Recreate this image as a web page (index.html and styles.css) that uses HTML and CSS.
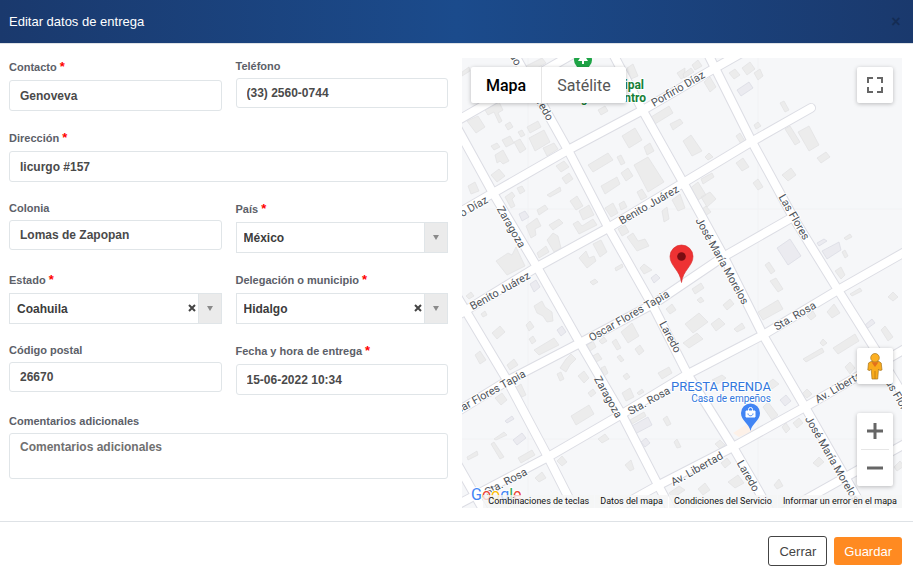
FILE: index.html
```html
<!DOCTYPE html>
<html lang="es">
<head>
<meta charset="utf-8">
<meta name="viewport" content="width=device-width, initial-scale=1">
<title>Editar datos de entrega</title>
<link rel="stylesheet" href="styles.css">
</head>
<body>
<main class="dialog">
  <header class="dialog-header">
    <h1 class="dialog-title">Editar datos de entrega</h1>
    <button type="button" class="dialog-close" aria-label="Cerrar ventana">×</button>
  </header>

  <div class="dialog-body">
    <form class="form" id="delivery">
      <div class="field required">
        <label for="contacto">Contacto <span class="mark">*</span></label>
        <input id="contacto" type="text" value="Genoveva">
      </div>
      <div class="field">
        <label for="telefono">Teléfono</label>
        <input id="telefono" type="tel" value="(33) 2560-0744">
      </div>
      <div class="field required wide">
        <label for="direccion">Dirección <span class="mark">*</span></label>
        <input id="direccion" type="text" value="licurgo #157">
      </div>
      <div class="field">
        <label for="colonia">Colonia</label>
        <input id="colonia" type="text" value="Lomas de Zapopan">
      </div>
      <div class="field required">
        <label for="pais">País <span class="mark">*</span></label>
        <div class="select">
          <select id="pais"><option>México</option></select>
          <span class="arrow"></span>
        </div>
      </div>
      <div class="field required">
        <label for="estado">Estado <span class="mark">*</span></label>
        <div class="select">
          <select id="estado"><option>Coahuila</option></select>
          <button type="button" class="clear" aria-label="Quitar estado"><svg viewBox="0 0 8 8"><path d="M1 1l6 6M7 1l-6 6"/></svg></button>
          <span class="arrow"></span>
        </div>
      </div>
      <div class="field required">
        <label for="municipio">Delegación o municipio <span class="mark">*</span></label>
        <div class="select">
          <select id="municipio"><option>Hidalgo</option></select>
          <button type="button" class="clear" aria-label="Quitar municipio"><svg viewBox="0 0 8 8"><path d="M1 1l6 6M7 1l-6 6"/></svg></button>
          <span class="arrow"></span>
        </div>
      </div>
      <div class="field">
        <label for="cp">Código postal</label>
        <input id="cp" type="text" value="26670">
      </div>
      <div class="field required">
        <label for="fecha">Fecha y hora de entrega <span class="mark">*</span></label>
        <input id="fecha" type="text" value="15-06-2022 10:34">
      </div>
      <div class="field wide">
        <label for="comentarios">Comentarios adicionales</label>
        <textarea id="comentarios" placeholder="Comentarios adicionales"></textarea>
      </div>
    </form>

    <section class="map" aria-label="Mapa de entrega">
      <svg class="map-canvas" viewBox="462 58 440 450" preserveAspectRatio="xMidYMid slice">
        <defs>
          <g id="roads">
            <path d="M455 124L493 193 537 267 580 343 622 415 657 483 674 515"/>
            <path d="M512 50L568 150 608 227 655 310 688 375 733 447 758 490 772 515"/>
            <path d="M611 50L643 111 684 184 723 255 763 335 805 407 867 515"/>
            <path d="M705 48L715 68 751 140 793 217 838 290 875 349 910 406"/>
            <path d="M455 293L467 313 507 380 548 457 580 520"/>
            <path d="M455 460L488 518"/>
            <path d="M455 122L580 50"/>
            <path d="M455 215L493 193 568 150 643 110 715 68 745 51"/>
            <path d="M455 317L537 267 608 228 683 183 751 142 811 108"/>
            <path d="M455 413L507 381 580 343 655 303 723 257 793 217"/>
            <path d="M455 506L548 457 622 414 688 374 763 335 838 290 910 249"/>
            <path d="M605 515L657 486 733 447 805 407 910 346"/>
            <path d="M778 515L910 441"/>
          </g>
        </defs>
        <rect x="462" y="58" width="440" height="450" fill="#f6f7f9"/>
        <path class="tile" d="M528 58V508M758 58V508M462 209H902M462 439H902"/>
        <path class="building" d="M467 121l11-5 7 11-9 6zM485 110l14-8 4 8-5 3 4 8-3 2-5-11-6 3zM505 125l5-3 3 5-5 3zM527 127l11-6 3 6-11 6zM529 138l15-8 6 12-15 9zM543 148l11-5 4 6-11 7zM502 140l8-4 4 7-8 4zM518 132l4-2 3 5-4 2zM514 142l6-3 6 10-6 4zM491 146l6-3 3 4-6 3zM495 155l8-5 6 11-6 3-3-3-3 2zM491 175l8-6 6 7-8 6zM556 166l8-5 5 6-8 5zM562 178l7-5 4 6-7 5zM588 165l20-12 5 7-20 12zM617 157l4-2 4 8-4 2zM622 136l13-8 7 12-13 8zM644 147l6-4 4 8-7 4zM634 165l14-8 16 25-16 10zM621 173l7-5 5 8-7 5zM601 186l16-9 3 7-15 10zM637 192l5-3 5 8-6 3zM651 117l18-11 4 7-18 11zM670 124l10-5 3 4-10 7zM677 73l8-5v9l-4 2zM598 110l7-4 3 5-7 4zM627 68l6-4 5 12-7 3zM524 67l18-9 4 5-16 9zM462 72l7-5 1 4-8 5zM468 186l7-4 4 9-8 3zM517 188l5-2 3 5-5 3zM505 197l7-5 3 4-3 3 3 7-4 2zM547 195l13-8 1 4-11 6zM537 210l8-5 3 4-9 6zM526 226l11-8 4 8-6 3 1 6-5 3zM549 225l10-6 4 4-10 7zM570 201l7-5 6 10-7 4zM579 211l10-6 5 10-11 5zM573 224l5-3 4 5 11-7 4 6-18 9zM547 240l6-7 5 3 3 12-7 4zM537 253l9-7 3 6-10 6zM496 261l12-8 4 2 4-8 9 19-18 9zM605 208l8-5 5 10-7 4zM619 204l5-3 3 6-6 3zM618 229l7-4 4 7-7 4zM627 237l6-4 5 8 7-2 4 7-12 5zM662 211l5-4 2 12-5 3zM672 200l8-6 5 14-7 3zM579 258l7-7 3 7 5-2 2 5-9 7zM593 244l8-4 6 12-7 5zM615 268l7-4 1 3-7 4zM640 268l4-4 8 6-8 4z"/>
        <path class="building" d="M683 74l8-6 3 4-10 6zM692 65l6-5 4 6-7 4zM704 82l6-5 6 10-6 5zM729 73l6-4 5 6-6 4zM742 68l8-6 5 7-8 6zM754 73l6-4 3 7-5 4zM780 103l4-2 5 9-4 2zM754 125l4-3 3 4-5 3zM736 136l4-3 5 8-4 3zM683 141l8-6 11 16-10 5zM705 157l4-4 4 4-5 3zM785 129l5-3 10 16-5 3zM798 132l11-6 10 19-10 6zM817 158l9-6 4 5-9 6zM782 175l9-7 5 7-8 6zM736 163l7-5 6 9-7 4zM753 183l5-4 5 8-5 3zM688 190l10-8 8 13-11 7zM701 197l9-5 6 7-9 8zM701 179l11-6 2 4-11 7zM701 210l5-4 5 6-6 4zM844 238l6-4 2 3-6 3zM842 252l3-2 3 6-3 2zM765 265l4-3 6 9-4 3zM835 271l6-4 4 8-4 4zM692 289l9-6 3 5-9 6zM697 300l4-3 3 4-4 2zM723 305l7-6 4 5-7 6zM685 324l14-11 9 9-15 11zM711 324l8-6 6 6-9 7zM683 343l14-10 6 6-14 9zM734 329l8-6 3 5-8 4zM758 312l20-12 5 9-20 11zM770 281l6-3 7 11-5 3zM807 316l6-5 3 5-5 4zM827 312l7-8 6 9-8 5zM850 294l10-6 2 3-10 5zM888 297l5-5 5 5-5 4zM881 330l4-4 8 11-5 4zM803 359l19-11 2 4-18 10zM820 343l3-4 4 4-4 3zM833 348l22-14 4 7-21 13zM845 367l5-5 5 6-5 6zM768 383l5-4 6 5-7 5zM802 394l5-5 5 5-5 4zM763 407l5-5 10 13-6 5zM782 427l4-4 4 6-4 4zM793 423l6-5 4 5-6 5zM715 444l5-4 5 5-5 4zM721 463l6-5 4 5-6 5zM728 482l10-7 6 8-9 5zM698 489l7-6 5 7-7 5zM774 485l5-6 4 7-6 3zM813 463l6-6 5 5-6 5zM894 467l6-6 4 5-7 5zM712 380l10-5 4 3-8 6z"/>
        <path class="building" d="M466 296l5-4 3 4-5 3zM481 314l4-3 2 4-4 2zM492 333l8-7 5 6-8 7zM534 306l8-5 3 6 7 5 1 9-6 1-4-6-6-3zM526 325l4-4 4 6-5 4zM529 339l4-3 3 5-4 3zM534 350l20-12 5 7-20 10zM475 355l5-4 6 9-6 4zM507 365l7-6 4 6-8 5zM515 388l6-4 5 11-4 2zM495 398l7-5 5 7-6 5zM560 368l6-9 5-5 5 5-6 6-4 7zM557 374l4-2 3 7-4 2zM578 376l6-5 5 7-5 5zM588 393l5-4 3 4-5 4zM571 416l18-11 5 9-18 11zM587 345l6-4 3 6-6 4zM591 357l7-4 4 6-8 4zM601 368l4-2 3 7-4 3zM599 341l5-4 3 4-5 3zM612 342l4-3 5 9-4 2zM621 332l11-9 7 13-11 7zM617 357l3-2 4 5-3 2zM635 349l5-4 4 6-5 4zM623 376l4-3 3 4-4 3zM622 393l8-5 4 9-8 4zM637 393l5-4 2 3-5 3zM658 373l11-6 3 6-10 6zM666 309l6-5 4 6-6 4zM590 282l5-3 3 3-5 3zM494 439l10-7 3 3-11 5zM491 444l3-2 10 15-4 2zM467 457l10-6 1 4-10 5zM518 458l14-8 3 5-14 8zM557 461l5-5 5 6-5 4zM535 478l7-6 4 6-7 4zM598 439l7-5 4 5-7 4zM630 420l14-8 2 4-14 8zM663 419l4-3 4 8-4 2zM674 442l3-3 4 8-4 1zM625 465l6-5 3 9-4 2zM669 493l10-7 6 4-12 8z"/>
        <path class="building tinted" d="M519 214l6-3 4 6-7 4zM651 278l5-4 4 4-6 5zM737 90l12-8 4 6-12 8zM777 248l13-9 11 17-13 9zM817 243l7-4 3 2-8 5zM822 251l17-9 2 8-14 9zM530 284l6-4 4 7-6 5zM557 330l5-4 4 6-5 4zM505 421l7-5 2 3-7 4zM513 440l9-7 4 5-9 7zM630 427l18-10 4 8-17 9zM641 442l5-4 4 5-5 4zM865 325l7-6 3 4-7 5zM780 400l6-5 5 6-6 5z"/>
        <path d="M733 433l14-9 6 7-14 6z" fill="#fdf1e8"/>
        <use href="#roads" class="road-edge"/>
        <use href="#roads" class="road-fill"/>

        <g class="street">
          <text transform="translate(678 89) rotate(-30)">Porfirio Díaz</text>
          <text transform="translate(461 214) rotate(-30)">Porfirio Díaz</text>
          <text transform="translate(649 205) rotate(-30)">Benito Juárez</text>
          <text transform="translate(500 291) rotate(-29)">Benito Juárez</text>
          <text transform="translate(511 227) rotate(60)">Zaragoza</text>
          <text transform="translate(608 397) rotate(61)">Zaragoza</text>
          <text transform="translate(510 50) rotate(60)">Laredo</text>
          <text transform="translate(542 105) rotate(60)">Laredo</text>
          <text transform="translate(670 337) rotate(62)">Laredo</text>
          <text transform="translate(748 476) rotate(60)">Laredo</text>
          <text transform="translate(722 261) rotate(61)">José María Morelos</text>
          <text transform="translate(832 459) rotate(60)">José María Morelos</text>
          <text transform="translate(794 217) rotate(60)">Las Flores</text>
          <text transform="translate(898 397) rotate(60)">Las Flores</text>
          <text transform="translate(629 316) rotate(-30)">Oscar Flores Tapia</text>
          <text transform="translate(485 395) rotate(-29)">Oscar Flores Tapia</text>
          <text transform="translate(649 401) rotate(-29)">Sta. Rosa</text>
          <text transform="translate(506 482) rotate(-28)">Sta. Rosa</text>
          <text transform="translate(795 316) rotate(-30)">Sta. Rosa</text>
          <text transform="translate(841 386) rotate(-30)">Av. Libertad</text>
          <text transform="translate(697 469) rotate(-29)">Av. Libertad</text>
        </g>

        <g class="park">
          <circle cx="583" cy="60" r="9"/>
          <path d="M583 53l5 8h-4v3h-2v-3h-4z" fill="#fff"/>
          <text x="644" y="89">Plaza Principal</text>
          <text x="646" y="102">Zaragoza Centro</text>
        </g>
        <g class="shop">
          <text x="771" y="391" class="shop-name">PRESTA PRENDA</text>
          <text x="771" y="402" class="shop-kind">Casa de empeños</text>
          <path d="M750.5 431C749 423 741 421 741 413a9.5 9.5 0 0 1 19 0C760 421 752 423 750.5 431z"/>
          <path d="M746 411h9v6h-9z" fill="#fff" stroke="#fff"/>
          <path d="M748.500 411v-1.500a2 2 0 0 1 4 0v1.500" fill="none" stroke="#fff"/>
          <path d="M748 413.500c0 3 5 3 5 0" fill="none" stroke="#4285f4"/>
        </g>
        <path d="M681.5 282.500C680 270 670 266 670 256.500a11.500 11.500 0 0 1 23 0C693 266 683 270 681.500 282.500z" fill="#ee3233" stroke="#d62b2b" stroke-width=".6"/>
        <circle cx="681.5" cy="256.500" r="4.300" fill="#7b0d12"/>
        <text class="brand" x="471" y="500"><tspan fill="#4285f4">G</tspan><tspan fill="#ea4335">o</tspan><tspan fill="#fbbc04">o</tspan><tspan fill="#4285f4">g</tspan><tspan fill="#34a853">l</tspan><tspan fill="#ea4335">e</tspan></text>
      </svg>

      <div class="map-types">
        <button type="button" class="active">Mapa</button>
        <button type="button">Satélite</button>
      </div>
      <button type="button" class="map-button fullscreen" aria-label="Pantalla completa">
        <svg width="16" height="16" viewBox="0 0 16 16"><path d="M1 6V1h5M10 1h5v5M15 10v5h-5M6 15H1v-5" fill="none" stroke="#666" stroke-width="2"/></svg>
      </button>
      <div class="map-side">
        <button type="button" class="map-button" aria-label="Street View">
          <svg width="16" height="27" viewBox="0 0 16 27"><path d="M4 8.500L1.500 10 .8 17l2.200.5L4.200 16l.8 10h5.700l.8-10 1.200 1.500 2.300-.5-.8-7L12 8.500z" fill="#f9ab1c" stroke="#a87620" stroke-width=".7"/><circle cx="8" cy="4.800" r="4.300" fill="#fdb022" stroke="#a87620" stroke-width=".7"/><path d="M4.500 9.300h7L8 14z" fill="#e2701c"/><path d="M8 18v8" stroke="#b97916" stroke-width=".8"/></svg>
        </button>
        <div class="zoom">
          <button type="button" aria-label="Acercar"><svg width="16" height="16" viewBox="0 0 16 16"><path d="M0 8h16M8 0v16" stroke="#666" stroke-width="3"/></svg></button>
          <button type="button" aria-label="Alejar"><svg width="16" height="16" viewBox="0 0 16 16"><path d="M0 8h16" stroke="#666" stroke-width="3"/></svg></button>
        </div>
      </div>
      <div class="credits">
        <button type="button">Combinaciones de teclas</button>
        <button type="button">Datos del mapa</button>
        <a href="#condiciones">Condiciones del Servicio</a>
        <a href="#informar">Informar un error en el mapa</a>
      </div>
    </section>
  </div>

  <footer class="dialog-footer">
    <button type="button" class="btn btn-outline">Cerrar</button>
    <button type="submit" form="delivery" class="btn btn-primary">Guardar</button>
  </footer>
</main>
</body>
</html>
```
FILE: styles.css
```css
* { box-sizing: border-box; }

body {
  margin: 0;
  background: #fff;
  font-family: "Liberation Sans", Arial, sans-serif;
  color: #444;
}

button, input, select, textarea { font: inherit; color: inherit; margin: 0; }
button { padding: 0; border: 0; background: none; cursor: pointer; }

.dialog-header {
  display: flex;
  align-items: center;
  justify-content: space-between;
  height: 44px;
  padding: 0 11px 0 9px;
  border-bottom: 1px solid #dee2e6;
  background: linear-gradient(90deg, #1a396d, #1b4b8c 50%, #1a396d);
  background-clip: padding-box;
}
.dialog-title { margin: 0; font-size: 13px; font-weight: 400; line-height: 17px; color: #fff; }
.dialog-close { width: 12px; font-size: 16px; font-weight: 700; line-height: 16px; color: #142c54; }

.dialog-body {
  display: grid;
  grid-template-columns: 439fr 440fr;
  gap: 14px;
  padding: 14px 11px 13px 9px;
}

.form {
  display: grid;
  grid-template-columns: 1fr 1fr;
  align-content: start;
  gap: 18px 14px;
}
.field { display: flex; flex-direction: column; gap: 4px; min-width: 0; }
.wide { grid-column: 1 / -1; }
.field label { font-size: 11px; font-weight: 700; line-height: 16px; color: #5c6068; white-space: nowrap; }
.required label { line-height: 18px; }
.mark { font-size: 13px; line-height: 1px; color: #f00; }

.field input, .field textarea, .select {
  width: 100%;
  height: 30px;
  border: 1px solid #e0e5e8;
  border-radius: 3px;
  background: #fff;
  font-size: 12px;
  font-weight: 700;
  color: #4a4a4a;
}
.field input { padding: 0 10px; }
.required input, .required .select { height: 31px; }
.field textarea { display: block; height: 46px; padding: 5px 10px; line-height: 16px; resize: none; }
.field textarea::placeholder { color: #707070; opacity: 1; }

.select { display: flex; border-radius: 0; color: #3c3c3c; }
.select select { flex: 1; min-width: 0; padding: 0 7px; border: 0; background: none; appearance: none; }
.clear { width: 12px; height: 28px; }
.clear svg { width: 8px; height: 8px; fill: none; stroke: #444; stroke-width: 2; }
.arrow { display: grid; place-items: center; width: 23px; border-left: 1px solid #e0e5e8; background: #ebebeb; }
.arrow::before { content: ""; border: solid transparent; border-width: 5px 3px 0; border-top-color: #8a8a8a; }

.map { position: relative; height: 450px; overflow: hidden; font-family: Roboto, sans-serif; }
.map-canvas { display: block; width: 100%; height: 100%; }
.tile { fill: none; stroke: #f1f2f4; }
.building { fill: #ececec; stroke: #e1e1e2; stroke-width: .7; }
.tinted { fill: #ebebf0; stroke: #d9dae2; }
.road-edge, .road-fill { fill: none; stroke-linecap: round; stroke-linejoin: round; }
.road-edge { stroke: #dcdde4; stroke-width: 10px; }
.road-fill { stroke: #fff; stroke-width: 8px; }
.map-canvas text { paint-order: stroke; stroke: #fff; stroke-width: 2px; stroke-linejoin: round; }
.street text { font-size: 11px; font-weight: 400; fill: #4d5259; text-anchor: middle; dominant-baseline: central; }
.park { fill: #1ea446; }
.park text { font-size: 12px; font-weight: 700; fill: #188038; text-anchor: end; }
.shop { fill: #4285f4; }
.shop text { fill: #3277dd; text-anchor: end; }
.shop-name { font-size: 13px; }
.shop-kind { font-size: 10px; }
.map-canvas .brand { font-size: 16px; }

.map-types, .map-button, .zoom { border-radius: 2px; background: #fff; box-shadow: 0 1px 4px rgba(0, 0, 0, .25); }
.map-types { position: absolute; top: 9px; left: 9px; display: flex; height: 36px; font-size: 16px; color: #565656; }
.map-types button { padding: 0 15px; }
.map-types button + button { border-left: 1px solid #e6e6e6; }
.map-types .active { font-weight: 500; color: #000; }
.map-button { display: grid; place-items: center; width: 36px; height: 36px; }
.fullscreen { position: absolute; top: 9px; right: 9px; }
.map-side { position: absolute; right: 9px; bottom: 22px; display: grid; gap: 29px; }
.zoom { display: grid; width: 36px; }
.zoom button { display: grid; place-items: center; height: 36px; }
.zoom button + button { height: 37px; background: linear-gradient(#e6e6e6, #e6e6e6) center top / 28px 1px no-repeat; }

.credits { position: absolute; right: 0; bottom: 0; display: flex; gap: 1px; font-size: 9px; line-height: 13px; color: #111; white-space: nowrap; }
.credits > * { padding: 0 5px; background: rgba(245, 245, 245, .8); color: inherit; text-decoration: none; }

.dialog-footer {
  display: flex;
  align-items: center;
  justify-content: flex-end;
  gap: 7px;
  padding: 14px 11px 6px;
  border-top: 1px solid #dee2e6;
}
.btn { height: 28px; padding: 0 10px; border-radius: 3px; font-size: 13px; }
.btn-outline { height: 30px; border: 1px solid #444; background: #fff; color: #444; }
.btn-primary { background: #ff8a21; color: #fff; }
```
